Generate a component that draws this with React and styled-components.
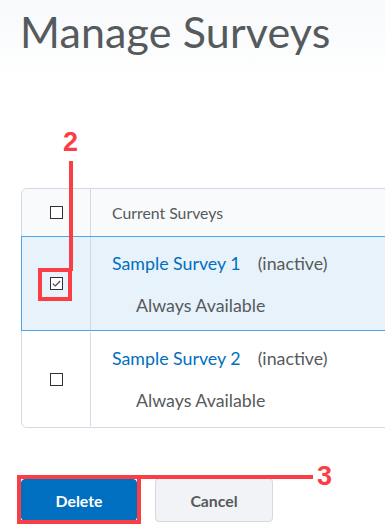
import React from "react";
import styled, { createGlobalStyle } from "styled-components";

const RED = "#fa3e45";

const GlobalStyle = createGlobalStyle`
  html, body {
    margin: 0;
    padding: 0;
    background: #ffffff;
    overflow: hidden;
  }
  body {
    font-family: Lato, "Open Sans", sans-serif;
    color: #565a5c;
  }
`;

const surveys = [
  { id: 1, name: "Sample Survey 1", status: "(inactive)", availability: "Always Available", selected: true },
  { id: 2, name: "Sample Survey 2", status: "(inactive)", availability: "Always Available", selected: false },
];

export default function App() {
  return (
    <>
      <GlobalStyle />
      <Page>
        <Header>
          <Title>Manage Surveys</Title>
        </Header>
        <Content>
          <Table>
            <HeadRow>
              <CheckCell>
                <Checkbox />
              </CheckCell>
              <HeadLabel>Current Surveys</HeadLabel>
            </HeadRow>
            {surveys.map((survey) => (
              <Row key={survey.id} selected={survey.selected}>
                <CheckCell>
                  <Checkbox checked={survey.selected}>
                    {survey.selected && (
                      <svg width="9" height="7" viewBox="0 0 9 7">
                        <path d="M0.8 3.6 L3.3 6 L8.2 1" fill="none" stroke="#4a4c4e" strokeWidth="1.2" />
                      </svg>
                    )}
                  </Checkbox>
                  {survey.selected && (
                    <>
                      <Ring />
                      <Leader />
                      <StepNumber>2</StepNumber>
                    </>
                  )}
                </CheckCell>
                <InfoCell>
                  <NameLine>
                    <SurveyLink href="#">{survey.name}</SurveyLink>
                    <Status>{survey.status}</Status>
                  </NameLine>
                  <Availability>{survey.availability}</Availability>
                </InfoCell>
              </Row>
            ))}
          </Table>
          <Actions>
            <DeleteWrap>
              <Button primary>Delete</Button>
              <ButtonRing />
              <HLeader />
              <StepNumberSide>3</StepNumberSide>
            </DeleteWrap>
            <Button>Cancel</Button>
          </Actions>
        </Content>
      </Page>
    </>
  );
}

const Page = styled.div`
  width: 385px;
  height: 532px;
  overflow: hidden;
`;

const Header = styled.header`
  height: 76px;
  padding: 6px 0 0 20px;
  box-sizing: border-box;
  background: linear-gradient(180deg, #f7f9fb 0%, #fbfcfd 60%, #ffffff 100%);
`;

const Title = styled.h1`
  margin: 0;
  font-family: Lato, sans-serif;
  font-weight: 400;
  font-size: 43px;
  line-height: 52px;
  color: #565a5c;
  letter-spacing: 0.15px;
`;

const Content = styled.main`
  padding: 112px 0 0 21px;
`;

const Table = styled.div`
  width: 400px;
  border: 1px solid #d3d9e3;
  border-radius: 6px;
  box-sizing: border-box;
`;

const HeadRow = styled.div`
  display: flex;
  height: 47px;
  background: #f9fafb;
  border-radius: 6px 6px 0 0;
`;

const Row = styled.div`
  display: flex;
  height: ${(p) => (p.selected ? "95px" : "96px")};
  box-sizing: border-box;
  background: ${(p) => (p.selected ? "#e8f2fa" : "#ffffff")};
  border-top: 1px solid ${(p) => (p.selected ? "#4ba6ec" : "transparent")};
  border-bottom: 1px solid ${(p) => (p.selected ? "#4ba6ec" : "transparent")};
  margin: ${(p) => (p.selected ? "0 0 0 -1px" : "0")};
  border-left: ${(p) => (p.selected ? "1px solid #4ba6ec" : "none")};

  &:last-child {
    border-radius: 0 0 6px 6px;
  }
`;

const CheckCell = styled.div`
  position: relative;
  width: 68px;
  flex: none;
  display: flex;
  align-items: center;
  justify-content: center;
  border-right: 1px solid #d3d9e3;
`;

const Checkbox = styled.span`
  width: 13px;
  height: 13px;
  box-sizing: border-box;
  border: 1px solid #2f3133;
  background: #ffffff;
  display: flex;
  align-items: center;
  justify-content: center;
  margin-left: 1px;
`;

const HeadLabel = styled.div`
  display: flex;
  align-items: center;
  padding-left: 21px;
  font-size: 15.8px;
  color: #565a5c;
`;

const InfoCell = styled.div`
  padding: 15px 0 0 21px;
  display: flex;
  flex-direction: column;
  gap: 20px;
`;

const NameLine = styled.div`
  display: flex;
  gap: 17px;
  font-size: 17.8px;
  line-height: 22px;
`;

const SurveyLink = styled.a`
  color: #006fbf;
  text-decoration: none;
`;

const Status = styled.span`
  color: #565a5c;
`;

const Availability = styled.div`
  padding-left: 24px;
  font-size: 17.8px;
  line-height: 22px;
  color: #565a5c;
`;

const Ring = styled.span`
  position: absolute;
  left: 16px;
  top: 31px;
  width: 34px;
  height: 33px;
  box-sizing: border-box;
  border: 4px solid ${RED};
  pointer-events: none;
`;

const Leader = styled.span`
  position: absolute;
  left: 47px;
  top: -76px;
  width: 3.5px;
  height: 110px;
  background: ${RED};
`;

const StepNumber = styled.span`
  position: absolute;
  left: 41px;
  top: -110px;
  font-family: "Liberation Sans", Arial, sans-serif;
  font-weight: 700;
  font-size: 27px;
  line-height: 30px;
  color: ${RED};
`;

const Actions = styled.div`
  display: flex;
  gap: 18px;
  margin-top: 51px;
`;

const DeleteWrap = styled.div`
  position: relative;
`;

const Button = styled.button`
  width: ${(p) => (p.primary ? "116px" : "118px")};
  height: ${(p) => (p.primary ? "42px" : "44px")};
  margin-top: ${(p) => (p.primary ? "0" : "-1px")};
  border-radius: 4px;
  border: 1px solid ${(p) => (p.primary ? "#006fbf" : "#d3d9e3")};
  background: ${(p) => (p.primary ? "#006fbf" : "#f1f3f6")};
  color: ${(p) => (p.primary ? "#ffffff" : "#565a5c")};
  font-family: Lato, sans-serif;
  font-weight: 700;
  font-size: 15.8px;
  cursor: pointer;
`;

const ButtonRing = styled.span`
  position: absolute;
  left: -4px;
  top: -4px;
  width: 124px;
  height: 49px;
  box-sizing: border-box;
  border: 4px solid ${RED};
  pointer-events: none;
`;

const HLeader = styled.span`
  position: absolute;
  left: 118px;
  top: -4px;
  width: 174px;
  height: 3.5px;
  background: ${RED};
`;

const StepNumberSide = styled.span`
  position: absolute;
  left: 296px;
  top: -18px;
  font-family: "Liberation Sans", Arial, sans-serif;
  font-weight: 700;
  font-size: 27px;
  line-height: 30px;
  color: ${RED};
`;
